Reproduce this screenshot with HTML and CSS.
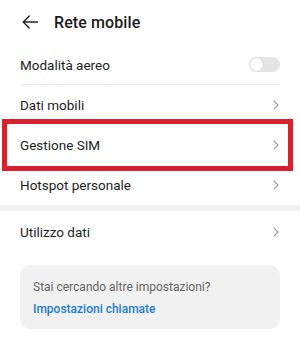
FILE: index.html
```html
<!DOCTYPE html>
<html lang="it">
<head>
<meta charset="utf-8">
<link rel="stylesheet" href="styles.css">
</head>
<body>
<div class="screen">
  <header class="topbar">
    <svg class="back" width="16" height="14" viewBox="0 0 16 14"><path d="M15.5 7H1.2M7.2 1L1.2 7l6 6" fill="none" stroke="#222" stroke-width="1.4" stroke-linecap="round" stroke-linejoin="round"/></svg>
    <h1 class="title">Rete mobile</h1>
  </header>

  <section class="group">
    <div class="row row-first">
      <span class="label">Modalità aereo</span>
      <span class="toggle"><span class="knob"></span></span>
    </div>
    <div class="row">
      <span class="label">Dati mobili</span>
      <svg class="chev" width="6" height="10" viewBox="0 0 6 10"><path d="M0.7 0.7L5 5L0.7 9.3" fill="none" stroke="#9a9a9a" stroke-width="1.1"/></svg>
    </div>
    <div class="row highlight">
      <span class="label">Gestione SIM</span>
      <svg class="chev" width="6" height="10" viewBox="0 0 6 10"><path d="M0.7 0.7L5 5L0.7 9.3" fill="none" stroke="#9a9a9a" stroke-width="1.1"/></svg>
    </div>
    <div class="row">
      <span class="label">Hotspot personale</span>
      <svg class="chev" width="6" height="10" viewBox="0 0 6 10"><path d="M0.7 0.7L5 5L0.7 9.3" fill="none" stroke="#9a9a9a" stroke-width="1.1"/></svg>
    </div>
  </section>

  <div class="band"></div>

  <section class="group">
    <div class="row row-tall">
      <span class="label">Utilizzo dati</span>
      <svg class="chev" width="6" height="10" viewBox="0 0 6 10"><path d="M0.7 0.7L5 5L0.7 9.3" fill="none" stroke="#9a9a9a" stroke-width="1.1"/></svg>
    </div>
  </section>

  <div class="card">
    <p class="card-q">Stai cercando altre impostazioni?</p>
    <a class="card-link">Impostazioni chiamate</a>
  </div>
</div>
</body>
</html>
```

FILE: styles.css
```css
* { box-sizing: border-box; }
html, body { margin: 0; padding: 0; background: #fff; }
body {
  font-family: Roboto, "Noto Sans", "Liberation Sans", sans-serif;
  color: #1d1d1d;
  width: 300px;
  height: 338px;
  overflow: hidden;
}
.screen { display: flex; flex-direction: column; }

.topbar {
  height: 44px;
  display: flex;
  align-items: center;
  padding: 0 0 0 22px;
}
.back { display: block; }
.title {
  margin: 0 0 0 16px;
  font-size: 16px;
  font-weight: 500;
  color: #1a1a1a;
  letter-spacing: 0.1px;
}

.group { display: flex; flex-direction: column; }
.row {
  position: relative;
  height: 40px;
  display: flex;
  align-items: center;
  justify-content: space-between;
  padding: 0 21px 0 20px;
}
.row-first { height: 41px; }
.row-first::after {
  content: "";
  position: absolute;
  left: 20px;
  right: 20px;
  bottom: 0;
  height: 1px;
  background: #ececec;
}
.row-tall { height: 42px; }
.label { font-size: 13.5px; color: #1d1d1d; }

.chev { display: block; }

.toggle {
  width: 31px;
  height: 15px;
  border-radius: 8px;
  background: #e5e5e5;
  display: flex;
  align-items: center;
  padding: 0 1px;
  margin-right: -1px;
}
.knob {
  width: 13px;
  height: 13px;
  border-radius: 50%;
  background: #fff;
  box-shadow: 0 0 0 0.5px #d0d0d0;
}

.highlight::before {
  content: "";
  position: absolute;
  top: -6px;
  bottom: -6px;
  left: 2px;
  right: 7px;
  border: 5px solid #db1f2c;
  pointer-events: none;
}

.band { height: 6px; background: #f3f3f3; }

.card {
  margin: 12px 20px 0;
  height: 64px;
  border-radius: 10px;
  background: #f1f1f1;
  padding: 13px 13px 0 13px;
}
.card-q {
  margin: 0;
  font-size: 12px;
  color: #666;
  line-height: 18px;
}
.card-link {
  display: block;
  margin-top: 4px;
  font-size: 12px;
  font-weight: 500;
  color: #1b7dd0;
  line-height: 18px;
}
```
